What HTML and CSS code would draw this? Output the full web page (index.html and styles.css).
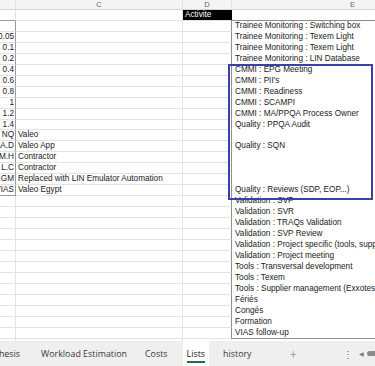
FILE: index.html
```html
<!DOCTYPE html>
<html lang="en">

<head>
    <meta charset="UTF-8">
    <meta name="viewport" content="width=device-width, initial-scale=1.0">
    <link rel="stylesheet" href="styles.css">
    <title>Lists</title>
</head>

<body>
    <div class="app">
        <!-- Feuille visible -->
        <div class="sheet">
            <div class="grid">
                <div class="hd"></div><div class="hd">C</div><div class="hd">D</div><div class="hd">E</div>

                <div class="c bx-bot"></div><div class="c"></div><div class="c act">Activite</div><div class="c ex-bot"></div>
                <div class="c b bx"></div><div class="c"></div><div class="c ex-l"></div><div class="c e">Trainee Monitoring : Switching box</div>
                <div class="c b bx">0.05</div><div class="c"></div><div class="c ex-l"></div><div class="c e">Trainee Monitoring : Texem Light</div>
                <div class="c b bx">0.1</div><div class="c"></div><div class="c ex-l"></div><div class="c e">Trainee Monitoring : Texem Light</div>
                <div class="c b bx">0.2</div><div class="c"></div><div class="c ex-l"></div><div class="c e">Trainee Monitoring : LIN Database</div>
                <div class="c b bx">0.4</div><div class="c"></div><div class="c ex-l"></div><div class="c e">CMMI : EPG Meeting</div>
                <div class="c b bx">0.6</div><div class="c"></div><div class="c ex-l"></div><div class="c e">CMMI : PII's</div>
                <div class="c b bx">0.8</div><div class="c"></div><div class="c ex-l"></div><div class="c e">CMMI : Readiness</div>
                <div class="c b bx">1</div><div class="c"></div><div class="c ex-l"></div><div class="c e">CMMI : SCAMPI</div>
                <div class="c b bx">1.2</div><div class="c"></div><div class="c ex-l"></div><div class="c e">CMMI : MA/PPQA Process Owner</div>
                <div class="c b bx">1.4</div><div class="c"></div><div class="c ex-l"></div><div class="c e">Quality : PPQA Audit</div>
                <div class="c b bx">NQ</div><div class="c">Valeo</div><div class="c ex-l"></div><div class="c e"></div>
                <div class="c b bx">AA.D</div><div class="c">Valeo App</div><div class="c ex-l"></div><div class="c e">Quality : SQN</div>
                <div class="c b bx">M.H</div><div class="c">Contractor</div><div class="c ex-l"></div><div class="c e"></div>
                <div class="c b bx">L.C</div><div class="c">Contractor</div><div class="c ex-l"></div><div class="c e"></div>
                <div class="c b bx">M.GM</div><div class="c">Replaced with LIN Emulator Automation</div><div class="c ex-l"></div><div class="c e"></div>
                <div class="c b bx bx-bot">VIAS</div><div class="c">Valeo Egypt</div><div class="c ex-l"></div><div class="c e">Quality : Reviews (SDP, EOP...)</div>
                <div class="c"></div><div class="c"></div><div class="c ex-l"></div><div class="c e">Validation : SVP</div>
                <div class="c"></div><div class="c"></div><div class="c ex-l"></div><div class="c e">Validation : SVR</div>
                <div class="c"></div><div class="c"></div><div class="c ex-l"></div><div class="c e">Validation : TRAQs Validation</div>
                <div class="c"></div><div class="c"></div><div class="c ex-l"></div><div class="c e">Validation : SVP Review</div>
                <div class="c"></div><div class="c"></div><div class="c ex-l"></div><div class="c e">Validation : Project specific (tools, support...)</div>
                <div class="c"></div><div class="c"></div><div class="c ex-l"></div><div class="c e">Validation : Project meeting</div>
                <div class="c"></div><div class="c"></div><div class="c ex-l"></div><div class="c e">Tools : Transversal development</div>
                <div class="c"></div><div class="c"></div><div class="c ex-l"></div><div class="c e">Tools : Texem</div>
                <div class="c"></div><div class="c"></div><div class="c ex-l"></div><div class="c e">Tools : Supplier management (Exxotest...)</div>
                <div class="c"></div><div class="c"></div><div class="c ex-l"></div><div class="c e">Fériés</div>
                <div class="c"></div><div class="c"></div><div class="c ex-l"></div><div class="c e">Congés</div>
                <div class="c"></div><div class="c"></div><div class="c ex-l"></div><div class="c e">Formation</div>
                <div class="c"></div><div class="c"></div><div class="c ex-l"></div><div class="c e ex-bot">VIAS follow-up</div>
                <div class="c"></div><div class="c"></div><div class="c"></div><div class="c"></div>
            </div>
            <!-- Rectangle dessiné par-dessus les cellules -->
            <div class="shape"></div>
        </div>

        <!-- Onglets des feuilles -->
        <div class="tabs">
            <span class="tab first">Synthesis</span>
            <span class="sep"></span>
            <span class="tab">Workload Estimation</span>
            <span class="sep"></span>
            <span class="tab">Costs</span>
            <span class="tab active"><span>Lists</span></span>
            <span class="tab">history</span>
            <span class="plus">+</span>
            <span class="more">⋮</span>
            <span class="arrow">◀</span>
            <span class="thumb"></span>
        </div>
    </div>
</body>

</html>
```

FILE: styles.css
```css
body {
    margin: 0px;
    background-color: #ffffff;
}

.app {
    width: 375px;
    height: 366px;
    display: flex;
    flex-direction: column;
    overflow: hidden;
}

.sheet {
    flex: 1;
    position: relative;
    overflow: hidden;
}

.grid {
    display: grid;
    grid-template-columns: 40px 167px 49px 242px;
    grid-template-rows: 10px;
    grid-auto-rows: 10.96px;
    margin-left: -24px;
    font-family: "Liberation Sans", Arial, sans-serif;
    font-size: 8.2px;
    color: #1a1a1a;
}

.hd {
    box-sizing: border-box;
    background-color: #f4f4f4;
    border-right: 1px solid #e2e2e2;
    border-bottom: 1px solid #d6d6d6;
    text-align: center;
    color: #666;
    font-size: 7.6px;
    line-height: 9px;
}

.c {
    box-sizing: border-box;
    border-right: 1px solid #e3e3e3;
    border-bottom: 1px solid #e3e3e3;
    line-height: 10px;
    padding-left: 2px;
    white-space: nowrap;
}

.b {
    text-align: right;
    padding: 0px 1px 0px 0px;
    overflow: hidden;
}

.bx {
    border-right-color: #9a9a9a;
}

.bx-bot {
    border-bottom-color: #9a9a9a;
}

.act {
    background-color: #000;
    color: #fff;
    border-right-color: #000;
}

.ex-l {
    border-right-color: #8c8c8c;
}

.e {
    border-bottom-color: #fff;
    border-right-color: #fff;
    padding-left: 3px;
}

.ex-bot {
    border-bottom-color: #8c8c8c;
}

.shape {
    position: absolute;
    left: 228px;
    top: 64px;
    width: 141px;
    height: 132px;
    border: 2px solid #3b40a4;
}

.tabs {
    height: 25px;
    flex-shrink: 0;
    display: flex;
    align-items: center;
    background-color: #efefef;
    font-family: "Open Sans", "Noto Sans", sans-serif;
    font-size: 8.9px;
    color: #3a3a3a;
    white-space: nowrap;
}

.tab {
    padding: 0px 9px;
    height: 25px;
    line-height: 26px;
}

.first {
    margin-left: -28px;
    padding-right: 12px;
}

.sep {
    width: 1px;
    height: 13px;
    background-color: #d2d2d2;
}

.active {
    background-color: #fff;
    padding: 0px 4px;
    margin: 0px 5px 0px 6px;
    color: #222;
}

.active span {
    display: inline-block;
    line-height: 15px;
    border-bottom: 2px solid #1e7145;
}

.plus {
    margin-left: 29px;
    font-size: 13px;
    color: #777;
    font-weight: 300;
}

.more {
    margin-left: 46px;
    font-size: 10px;
    color: #666;
}

.arrow {
    margin-left: 6px;
    font-size: 6px;
    color: #777;
}

.thumb {
    margin-left: 3px;
    width: 14px;
    height: 5px;
    border-radius: 3px;
    background-color: #8a8a8a;
    flex-shrink: 0;
}
```
